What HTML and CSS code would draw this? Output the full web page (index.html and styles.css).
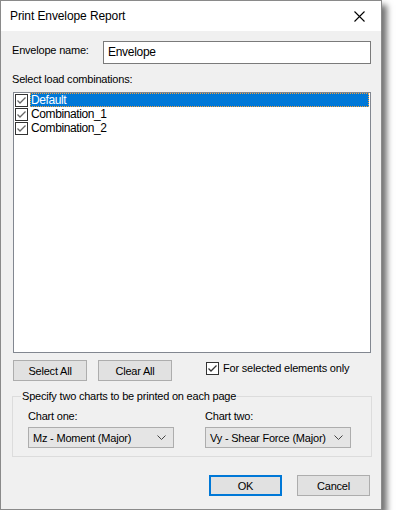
FILE: index.html
```html
<!DOCTYPE html>
<html lang="en">
<head>
    <meta charset="UTF-8">
    <title>Print Envelope Report</title>
    <link rel="stylesheet" href="styles.css">
</head>
<body>
    <div class="dialog">
        <div class="titlebar">
            <span class="title">Print Envelope Report</span>
            <svg class="close" width="11" height="11" viewBox="0 0 11 11">
                <path d="M0.5 0.5 L10.5 10.5 M10.5 0.5 L0.5 10.5" stroke="#000" stroke-width="1.1" fill="none"/>
            </svg>
        </div>
        <div class="content">
            <div class="name-row">
                <label class="name-label">Envelope name:</label>
                <div class="textbox">Envelope</div>
            </div>
            <div class="list-label">Select load combinations:</div>
            <div class="listbox">
                <div class="item selected">
                    <span class="check"><svg width="11" height="11" viewBox="0 0 11 11"><path d="M1.5 5.5 L4 8 L9.5 2.5" stroke="#666" stroke-width="1.3" fill="none"/></svg></span>
                    <span class="item-text">Default</span>
                </div>
                <div class="item">
                    <span class="check"><svg width="11" height="11" viewBox="0 0 11 11"><path d="M1.5 5.5 L4 8 L9.5 2.5" stroke="#666" stroke-width="1.3" fill="none"/></svg></span>
                    <span class="item-text">Combination_1</span>
                </div>
                <div class="item">
                    <span class="check"><svg width="11" height="11" viewBox="0 0 11 11"><path d="M1.5 5.5 L4 8 L9.5 2.5" stroke="#666" stroke-width="1.3" fill="none"/></svg></span>
                    <span class="item-text">Combination_2</span>
                </div>
            </div>
            <div class="button-row">
                <button class="btn">Select All</button>
                <button class="btn">Clear All</button>
                <div class="option">
                    <span class="check"><svg width="11" height="11" viewBox="0 0 11 11"><path d="M1.5 5.5 L4 8 L9.5 2.5" stroke="#333" stroke-width="1.3" fill="none"/></svg></span>
                    <span>For selected elements only</span>
                </div>
            </div>
            <fieldset class="group">
                <legend>Specify two charts to be printed on each page</legend>
                <div class="charts">
                    <div class="chart">
                        <div class="chart-label">Chart one:</div>
                        <div class="combo">
                            <span>Mz - Moment (Major)</span>
                            <svg width="9" height="6" viewBox="0 0 9 6"><path d="M0.5 0.5 L4.5 4.5 L8.5 0.5" stroke="#444" stroke-width="1" fill="none"/></svg>
                        </div>
                    </div>
                    <div class="chart">
                        <div class="chart-label">Chart two:</div>
                        <div class="combo">
                            <span>Vy - Shear Force (Major)</span>
                            <svg width="9" height="6" viewBox="0 0 9 6"><path d="M0.5 0.5 L4.5 4.5 L8.5 0.5" stroke="#444" stroke-width="1" fill="none"/></svg>
                        </div>
                    </div>
                </div>
            </fieldset>
            <div class="footer">
                <button class="btn btn-default">OK</button>
                <button class="btn">Cancel</button>
            </div>
        </div>
    </div>
</body>
</html>
```

FILE: styles.css
```css
body {
    margin: 0;
    background: #fff;
    font-family: "Liberation Sans", Arial, sans-serif;
    font-size: 11px;
    letter-spacing: -0.2px;
    color: #000;
}
.dialog {
    width: 380px;
    height: 508px;
    border: 1px solid #8a8a8a;
    background: #f0f0f0;
    box-shadow: 5px 5px 6px rgba(0, 0, 0, 0.55);
    display: flex;
    flex-direction: column;
}
.titlebar {
    height: 30px;
    background: #fff;
    display: flex;
    align-items: center;
    justify-content: space-between;
    padding: 0 16px 0 9px;
}
.title {
    font-size: 12px;
    letter-spacing: -0.1px;
}
.close {
    margin-top: 1px;
}
.content {
    padding: 0 10px 0 11px;
    display: flex;
    flex-direction: column;
}
.name-row {
    display: flex;
    align-items: flex-start;
    margin-top: 10px;
}
.name-label {
    width: 91px;
    padding-top: 3px;
}
.textbox {
    width: 258px;
    height: 21px;
    border: 1px solid #7a7a7a;
    background: #fff;
    padding: 0 4px;
    line-height: 21px;
    font-size: 12px;
    letter-spacing: -0.3px;
}
.list-label {
    margin-top: 9px;
    height: 19px;
}
.listbox {
    width: 356px;
    height: 259px;
    margin-left: 1px;
    border: 1px solid #828790;
    background: #fff;
}
.item {
    display: flex;
    align-items: center;
    height: 14px;
}
.item .check {
    margin-left: 1px;
}
.check {
    width: 11px;
    height: 11px;
    border: 1px solid #333;
    background: #fff;
    display: inline-flex;
    flex-shrink: 0;
}
.item-text {
    margin-left: 2px;
    font-size: 12px;
    letter-spacing: -0.4px;
    line-height: 14px;
    padding: 0 1px;
}
.item.selected .item-text {
    flex: 1;
    background: #0078d7;
    color: #fff;
    outline: 1px dotted #f7a23b;
    outline-offset: -1px;
    margin-right: 1px;
}
.button-row {
    display: flex;
    align-items: center;
    margin-top: 7px;
    margin-left: 1px;
}
.btn {
    height: 21px;
    width: 74px;
    border: 1px solid #adadad;
    background: #e1e1e1;
    font-family: "Liberation Sans", Arial, sans-serif;
    font-size: 11px;
    letter-spacing: -0.2px;
    padding: 0;
    color: #000;
}
.button-row .btn + .btn {
    margin-left: 11px;
}
.option {
    display: flex;
    align-items: center;
    margin-left: 34px;
    margin-top: -5px;
}
.option span + span {
    margin-left: 4px;
}
.group {
    margin: 9px 0 0 0;
    padding: 0 0 8px 0;
    width: 358px;
    min-inline-size: 0;
    box-sizing: content-box;
    border: 1px solid #dcdcdc;
}
.group legend {
    padding: 0 1px;
    margin-left: 8px;
}
.charts {
    display: flex;
    padding-left: 15px;
    margin-top: 8px;
}
.chart {
    width: 177px;
}
.chart + .chart {
    width: 166px;
}
.chart-label {
    height: 17px;
}
.combo {
    width: 146px;
    height: 21px;
    border: 1px solid #adadad;
    background: #e5e5e5;
    display: flex;
    align-items: center;
    justify-content: space-between;
    padding: 0 7px 0 4px;
    box-sizing: border-box;
    font-size: 11px;
    white-space: nowrap;
}
.footer {
    display: flex;
    justify-content: flex-end;
    margin-top: 18px;
    padding-right: 1px;
}
.footer .btn {
    width: 73px;
    height: 21px;
}
.footer .btn + .btn {
    margin-left: 15px;
}
.btn-default {
    border: 2px solid #0078d7;
}
```
